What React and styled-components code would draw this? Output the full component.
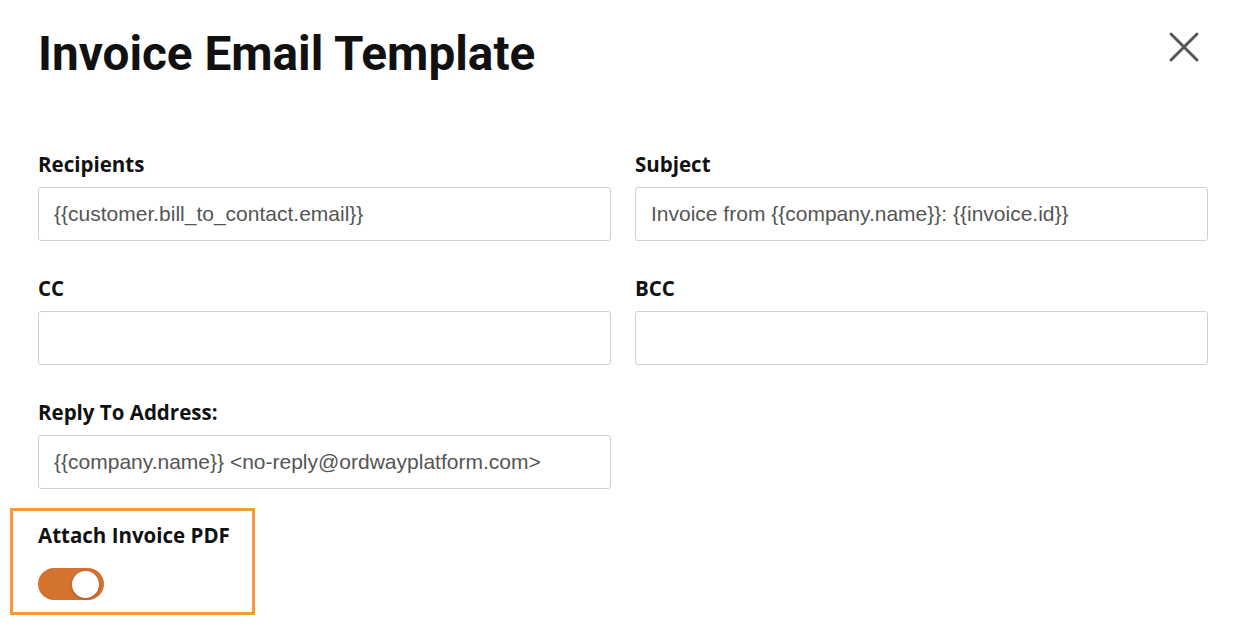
import styled, { createGlobalStyle } from "styled-components";

const Global = createGlobalStyle`
  body {
    margin: 0;
    background: #fff;
  }
`;

const Page = styled.div`
  padding: 19px 26px 0 38px;
`;

const Header = styled.div`
  display: flex;
  align-items: flex-start;
  justify-content: space-between;
`;

const Title = styled.h1`
  margin: 0;
  font-family: Roboto, "Liberation Sans", sans-serif;
  font-weight: 700;
  font-size: 47.7px;
  line-height: 70px;
  color: #111;
`;

const Close = styled.button`
  border: 0;
  background: none;
  padding: 0;
  margin-top: 12px;
  margin-right: 8px;
  width: 32px;
  height: 32px;
  cursor: pointer;
  svg {
    display: block;
  }
`;

const Grid = styled.div`
  display: grid;
  grid-template-columns: 573px 573px;
  column-gap: 24px;
  row-gap: 35px;
  margin-top: 63px;
`;

const Field = styled.div`
  display: flex;
  flex-direction: column;
  gap: 11px;
`;

const Label = styled.label`
  font-family: "Open Sans", "Liberation Sans", sans-serif;
  font-weight: 700;
  font-size: 20.5px;
  line-height: 24px;
  color: #111;
  white-space: nowrap;
`;

const Input = styled.input`
  box-sizing: border-box;
  height: 54px;
  width: 100%;
  border: 1px solid #cfcfd4;
  border-radius: 3px;
  padding: 0 15px;
  font-family: "Liberation Sans", Arial, sans-serif;
  font-size: 21px;
  color: #555;
  outline: none;
`;

const AttachBox = styled.div`
  margin: 19px 0 0 -28px;
  width: 245px;
  box-sizing: border-box;
  border: 3px solid #f29a3c;
  padding: 12px 0 12px 25px;
  display: flex;
  flex-direction: column;
  align-items: flex-start;
  gap: 21px;
`;

const Toggle = styled.div`
  width: 66px;
  height: 32px;
  border-radius: 16px;
  background: ${(p) => (p.$on ? "#d4722f" : "#ccc")};
  display: flex;
  align-items: center;
  justify-content: ${(p) => (p.$on ? "flex-end" : "flex-start")};
  padding: 0 5px;
  box-sizing: border-box;
`;

const Knob = styled.div`
  width: 27px;
  height: 27px;
  border-radius: 50%;
  background: #fff;
  box-shadow: 0 1px 3px rgba(0, 0, 0, 0.25);
`;

const fields = [
  { label: "Recipients", value: "{{customer.bill_to_contact.email}}" },
  { label: "Subject", value: "Invoice from {{company.name}}: {{invoice.id}}" },
  { label: "CC", value: "" },
  { label: "BCC", value: "" },
  { label: "Reply To Address:", value: "{{company.name}} <no-reply@ordwayplatform.com>" },
];

export default function App() {
  return (
    <Page>
      <Global />
      <Header>
        <Title>Invoice Email Template</Title>
        <Close aria-label="Close">
          <svg width="32" height="32" viewBox="0 0 32 32">
            <path d="M3 3 L29 29 M29 3 L3 29" stroke="#555" strokeWidth="3" strokeLinecap="round" />
          </svg>
        </Close>
      </Header>
      <Grid>
        {fields.map((f) => (
          <Field key={f.label}>
            <Label>{f.label}</Label>
            <Input readOnly value={f.value} />
          </Field>
        ))}
      </Grid>
      <AttachBox>
        <Label>Attach Invoice PDF</Label>
        <Toggle $on>
          <Knob />
        </Toggle>
      </AttachBox>
    </Page>
  );
}
